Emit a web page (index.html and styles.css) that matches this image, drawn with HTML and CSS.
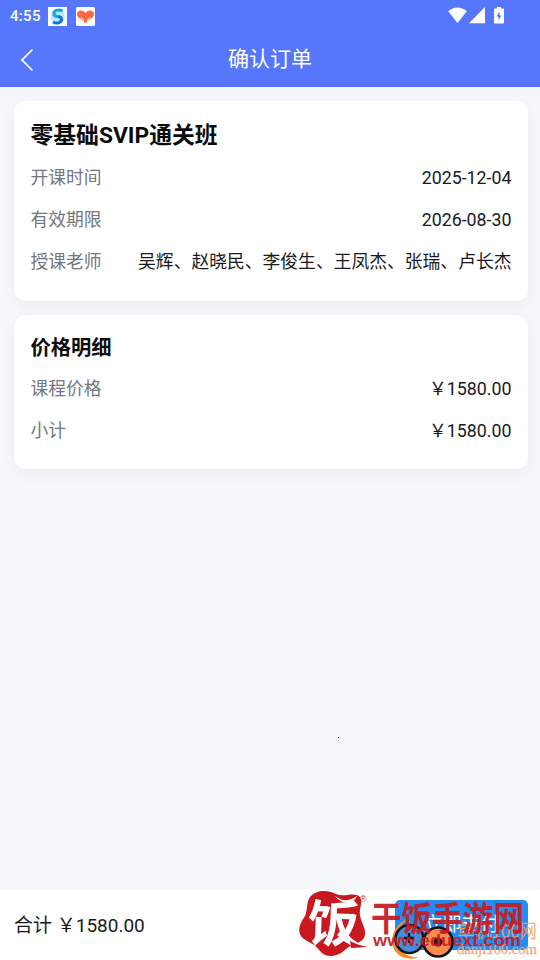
FILE: index.html
```html
<!DOCTYPE html>
<html lang="zh-CN">
<head>
<meta charset="utf-8">
<title>确认订单</title>
<link rel="stylesheet" href="styles.css">
</head>
<body>
<div class="app">
  <header class="top">
    <div class="status">
      <span class="clock">4:55</span>
      <svg class="notice" viewBox="0 0 19 19"><path fill="#fff" d="M0 0h19v19H0z"/><circle cx="9.700" cy="9.500" r="7.200" fill="#b5eafb"/><path d="M14.500 4C10 1.500 5.500 4 6 7c.3 2 2 2.500 3.500 2.500" fill="none" stroke="#16a5e4" stroke-width="3"/><path d="M5 15c4.500 2.500 9 0 8.500-3-.3-2-2-2.500-4-2.500" fill="none" stroke="#1474d5" stroke-width="3"/></svg>
      <svg class="notice" viewBox="0 0 19 19"><rect width="19" height="19" rx="1.500" fill="#fff"/><path d="M9.500 16C6 14 1 11 1 7c0-4 6-5 8.500-1C12 2 18 3 18 7c0 4-5 7-8.500 9z" fill="#fa6846"/><path d="M2 11l4 2 2 4M17 11l-4 2-2 4M5 10l2.500 3.500V17M14 10l-2.500 3.500V17" fill="none" stroke="#fff" stroke-width=".9"/></svg>
      <svg class="signals" viewBox="0 0 58 18" fill="#fff"><path d="M.2 4.300Q9.500-3.200 18.800 4.300L9.500 16z"/><path d="M37 0v16.300H21z"/><path fill-rule="evenodd" d="M47 1.500h2V0h4v1.500h2q1 0 1 1v13q0 1-1 1h-8q-1 0-1-1v-13q0-1 1-1zM51.500 4.500l-3 5h2V13.500l3-5h-2z"/></svg>
    </div>
    <div class="nav">
      <svg class="back" viewBox="0 0 14 24"><path d="M12.500 1.500L2 12l10.500 10.500" fill="none" stroke="#fff" stroke-width="1.700"/></svg>
      <h1>确认订单</h1>
    </div>
  </header>
  <main class="content">
    <section class="card course">
      <h2>零基础SVIP通关班</h2>
      <div class="row"><span class="label">开课时间</span><span>2025-12-04</span></div>
      <div class="row"><span class="label">有效期限</span><span>2026-08-30</span></div>
      <div class="row"><span class="label">授课老师</span><span>吴辉、赵晓民、李俊生、王凤杰、张瑞、卢长杰</span></div>
    </section>
    <section class="card price">
      <h2>价格明细</h2>
      <div class="row"><span class="label">课程价格</span><span>￥1580.00</span></div>
      <div class="row"><span class="label">小计</span><span>￥1580.00</span></div>
    </section>
    <i class="speck"></i>
  </main>
  <footer class="bar">
    <span class="total">合计 ￥1580.00</span>
    <button class="pay">立即支付</button>
    <svg class="marks" viewBox="290 880 250 80">
      <g fill="#f4a16b" opacity=".9">
        <text x="457" y="938" font-family="Noto Sans CJK SC, sans-serif" font-size="19" textLength="80" lengthAdjust="spacingAndGlyphs">单机100网</text>
        <text x="457" y="954" font-family="Liberation Serif, serif" font-size="15" textLength="80" lengthAdjust="spacingAndGlyphs" stroke="#f4a16b" stroke-width=".3">danji100.com</text>
      </g>
      <path d="M407 919c-19 8-20 35-1 39 5 1 9 1 12-1-14 1-22-10-20-21 1-7 4-12 9-17z" fill="#f58b22"/>
      <circle cx="409.500" cy="939" r="14" fill="#438edc" stroke="#10151d" stroke-width="2.600"/>
      <circle cx="438" cy="942" r="14.500" fill="#fb8b50" stroke="#10151d" stroke-width="2.600"/>
      <path d="M409 933v10m-5-5h10" stroke="#10151d" stroke-width="2.500"/><circle cx="438" cy="942" r="4.500" fill="#39171a"/>
      <path d="M310 897c7-8 18-7 26-3 7 3 15-1 21 1 8 3 2 13 3 20 1 9 8 15 4 23-4 6-12 6-18 11-8 8-20 10-26 2-4-6-10-8-16-12-9-7-3-17 1-23 3-7 1-13 5-19z" fill="#c9191e"/>
      <text x="308" y="942" font-family="Noto Sans CJK SC, sans-serif" font-weight="700" font-size="50" fill="#fff" textLength="52" lengthAdjust="spacingAndGlyphs" transform="rotate(2 334 922)">饭</text>
      <path d="M335 896c8 6 15 5 22 0-3 8-14 10-22 0zM341 930c7 9 14 14 26 17-11 1-22-3-30-12z" fill="#fff"/>
      <path d="M350 941c6 3 11 5 18 6l-17 1z" fill="#c9191e"/>
      <text x="360" y="902" font-family="Liberation Sans, sans-serif" font-size="9" fill="#b8373b">®</text>
      <g fill="#c51d25" font-weight="700" opacity=".94">
        <text x="371" y="931" font-family="Noto Sans CJK SC, sans-serif" font-size="34.500" textLength="153" lengthAdjust="spacingAndGlyphs">干饭手游网</text>
        <text x="373" y="946" font-family="Liberation Sans, sans-serif" font-size="17" textLength="148" lengthAdjust="spacingAndGlyphs">www.eduext.com</text>
      </g>
    </svg>
  </footer>
</div>
</body>
</html>
```
FILE: styles.css
```css
* { box-sizing: border-box; }

body {
  margin: 0;
  font-family: Roboto, "Noto Sans CJK SC", sans-serif;
  color: #181a20;
}

h1, h2 { margin: 0; }

.app {
  height: 960px;
  display: flex;
  flex-direction: column;
  background: #f5f7fb;
  overflow: hidden;
}

.top {
  height: 87px;
  background: #5677fc;
  color: #fff;
}

.status {
  height: 32px;
  padding: 0 34px 0 10px;
  display: flex;
  align-items: center;
}

.clock {
  width: 38px;
  font-size: 15px;
  font-weight: 500;
  letter-spacing: .3px;
}

.notice {
  width: 19px;
  height: 19px;
  margin-right: 9px;
}

.signals {
  width: 58px;
  height: 18px;
  margin-left: auto;
}

.nav {
  height: 55px;
  padding: 0 20px;
  display: grid;
  grid-template-columns: 14px 1fr 14px;
  align-items: center;
}

.back {
  width: 14px;
  height: 24px;
}

.nav h1 {
  padding-bottom: 5px;
  font-size: 21px;
  font-weight: 400;
  text-align: center;
}

.content {
  flex: 1;
  padding: 14px 12px 0 14px;
  display: flex;
  flex-direction: column;
  gap: 14px;
}

.card {
  padding: 17px 16.500px 0;
  border-radius: 12px;
  background: #fff;
  box-shadow: 0 5px 18px rgba(0, 0, 0, .045);
}

.course { height: 200px; }
.price { height: 154px; }

.card h2 {
  height: 39px;
  line-height: 36px;
  font-size: 22.800px;
  font-weight: 700;
  color: #0c0c0d;
}

.price h2 {
  height: 36px;
  line-height: 33px;
  font-size: 20.300px;
}

.row {
  height: 42px;
  display: flex;
  justify-content: space-between;
  line-height: 42px;
  font-size: 17.800px;
  white-space: nowrap;
}

.label { color: #737780; }

.speck {
  width: 1px;
  height: 1px;
  margin: 254px 0 0 324px;
  background: #333;
}

.bar {
  position: relative;
  height: 70px;
  padding: 0 12px 0 14px;
  display: flex;
  align-items: center;
  justify-content: space-between;
  background: #fff;
}

.total {
  padding-bottom: 3px;
  font-size: 19px;
}

.pay {
  width: 133px;
  height: 50px;
  border: 0;
  padding: 0 0 6px;
  border-radius: 5px;
  background: #238cf0;
  color: #fff;
  font: 19px "Noto Sans CJK SC", sans-serif;
}

.marks {
  position: absolute;
  right: 0;
  bottom: 0;
  width: 250px;
  height: 80px;
}
```
